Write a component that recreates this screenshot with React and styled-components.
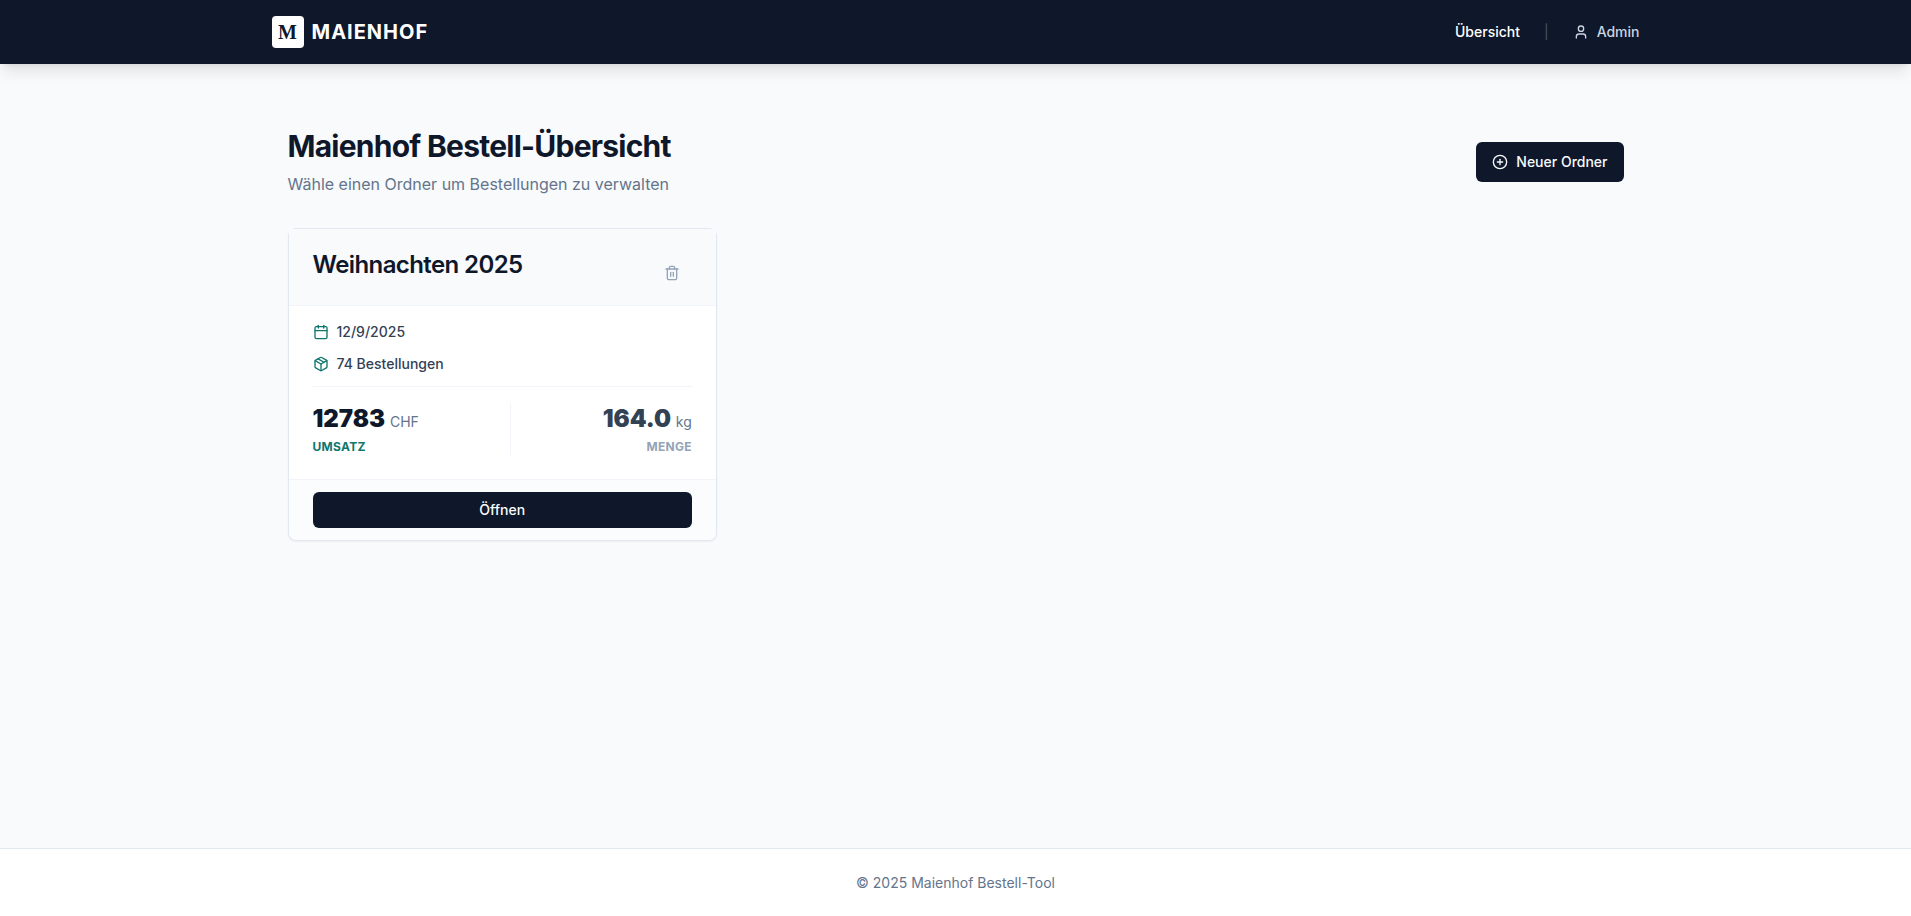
import React, { useState } from "react";
import styled, { createGlobalStyle, css } from "styled-components";
import { Calendar, CirclePlus, Package, Trash2, User } from "lucide-react";

const initialFolders = [
  {
    id: 1,
    name: "Weihnachten 2025",
    date: "12/9/2025",
    orders: 74,
    revenue: 12783,
    weight: 164,
  },
];

const FolderCard = ({ folder, onDelete }) => {
  return (
    <Card>
      <CardHeader>
        <CardTitle>{folder.name}</CardTitle>
        <IconButton
          type="button"
          aria-label="Ordner löschen"
          onClick={() => onDelete(folder.id)}
        >
          <Trash2 size={16} />
        </IconButton>
      </CardHeader>
      <CardContent>
        <InfoRow>
          <Calendar size={16} />
          <span>{folder.date}</span>
        </InfoRow>
        <InfoRow>
          <Package size={16} />
          <span>{folder.orders} Bestellungen</span>
        </InfoRow>
        <Stats>
          <Stat>
            <StatValue>
              {folder.revenue} <Unit>CHF</Unit>
            </StatValue>
            <StatLabel>UMSATZ</StatLabel>
          </Stat>
          <Stat $muted>
            <StatValue $muted>
              {folder.weight.toFixed(1)} <Unit>kg</Unit>
            </StatValue>
            <StatLabel $muted>MENGE</StatLabel>
          </Stat>
        </Stats>
      </CardContent>
      <CardFooter>
        <Button type="button" $full>
          Öffnen
        </Button>
      </CardFooter>
    </Card>
  );
};

const App = () => {
  const [folders, setFolders] = useState(initialFolders);

  const handleDelete = (id) => {
    setFolders(folders.filter((folder) => folder.id !== id));
  };

  return (
    <Page>
      <GlobalStyle />
      <Header>
        <HeaderInner>
          <Brand href="#">
            <Logo>M</Logo>
            <span>MAIENHOF</span>
          </Brand>
          <Nav>
            <NavLink href="#" $active>
              Übersicht
            </NavLink>
            <Divider>|</Divider>
            <NavLink href="#admin">
              <User size={16} />
              Admin
            </NavLink>
          </Nav>
        </HeaderInner>
      </Header>
      <Main>
        <TitleRow>
          <div>
            <h1>Maienhof Bestell-Übersicht</h1>
            <p>Wähle einen Ordner um Bestellungen zu verwalten</p>
          </div>
          <Button type="button">
            <CirclePlus size={16} />
            Neuer Ordner
          </Button>
        </TitleRow>
        <Grid>
          {folders.map((folder) => (
            <FolderCard
              key={folder.id}
              folder={folder}
              onDelete={handleDelete}
            />
          ))}
        </Grid>
      </Main>
      <Footer>© 2025 Maienhof Bestell-Tool</Footer>
    </Page>
  );
};

export default App;

const GlobalStyle = createGlobalStyle`
  *, *::before, *::after {
    box-sizing: border-box;
  }

  body {
    margin: 0;
    font-family: Inter, "Liberation Sans", sans-serif;
    font-size: 16px;
    line-height: 24px;
    color: #0f172a;
    background-color: #f8fafc;
  }

  h1, h2, p {
    margin: 0;
  }

  a {
    text-decoration: none;
  }

  button {
    font-family: inherit;
    border: none;
    cursor: pointer;
  }
`;

const Page = styled.div`
  display: flex;
  flex-direction: column;
  min-height: 100vh;
`;

const Header = styled.header`
  background-color: #0f172a;
  box-shadow: 0 10px 15px -3px rgba(0, 0, 0, 0.1),
    0 4px 6px -4px rgba(0, 0, 0, 0.1);
`;

const HeaderInner = styled.div`
  display: flex;
  align-items: center;
  justify-content: space-between;
  max-width: 1400px;
  height: 64px;
  margin: 0 auto;
  padding: 0 16px;
`;

const Brand = styled.a`
  display: flex;
  align-items: center;
  gap: 8px;
  color: white;
  font-size: 20px;
  font-weight: 700;
  line-height: 28px;
  letter-spacing: 0.05em;
`;

const Logo = styled.span`
  display: flex;
  align-items: center;
  justify-content: center;
  width: 32px;
  height: 32px;
  border-radius: 4px;
  background-color: white;
  color: #0f172a;
  font-family: "Liberation Serif", serif;
  letter-spacing: normal;
`;

const Nav = styled.nav`
  display: flex;
  align-items: center;
  gap: 24px;
  font-size: 14px;
  line-height: 20px;
`;

const NavLink = styled.a`
  display: flex;
  align-items: center;
  gap: 8px;
  font-weight: 500;
  color: ${({ $active }) => ($active ? "white" : "#cbd5e1")};
`;

const Divider = styled.span`
  color: #475569;
`;

const Main = styled.main`
  flex: 1;
  width: 100%;
  max-width: 1400px;
  margin: 0 auto;
  padding: 64px 32px;
`;

const TitleRow = styled.div`
  display: flex;
  align-items: center;
  justify-content: space-between;
  margin-bottom: 32px;

  h1 {
    font-size: 30px;
    font-weight: 700;
    line-height: 36px;
    letter-spacing: -0.025em;
  }

  p {
    margin-top: 8px;
    color: #64748b;
  }
`;

const Button = styled.button`
  display: inline-flex;
  align-items: center;
  justify-content: center;
  gap: 8px;
  height: 40px;
  padding: 0 16px;
  border-radius: 6px;
  background-color: #0f172a;
  color: #f8fafc;
  font-size: 14px;
  font-weight: 500;
  line-height: 20px;

  ${({ $full }) =>
    $full &&
    css`
      display: flex;
      width: 100%;
      height: 36px;
    `}
`;

const IconButton = styled.button`
  display: flex;
  align-items: center;
  justify-content: center;
  width: 40px;
  height: 40px;
  padding: 0;
  border-radius: 6px;
  background: none;
  color: #94a3b8;
`;

const Grid = styled.div`
  display: grid;
  grid-template-columns: repeat(3, 1fr);
  gap: 24px;

  @media (max-width: 1024px) {
    grid-template-columns: 1fr;
  }
`;

const Card = styled.article`
  border: 1px solid #e2e8f0;
  border-radius: 8px;
  background-color: white;
  box-shadow: 0 1px 2px rgba(0, 0, 0, 0.05);
`;

const CardHeader = styled.div`
  display: flex;
  align-items: flex-start;
  justify-content: space-between;
  padding: 24px 24px 12px;
  border-bottom: 1px solid #f1f5f9;
  background-color: #f8fafc;
`;

const CardTitle = styled.h2`
  font-size: 24px;
  font-weight: 600;
  line-height: 24px;
  letter-spacing: -0.025em;
`;

const CardContent = styled.div`
  display: flex;
  flex-direction: column;
  gap: 12px;
  padding: 16px 24px 24px;
`;

const InfoRow = styled.div`
  display: flex;
  align-items: center;
  gap: 8px;
  color: #334155;
  font-size: 14px;
  font-weight: 500;
  line-height: 20px;

  svg {
    color: #0f766e;
  }
`;

const Stats = styled.div`
  display: grid;
  grid-template-columns: 1fr 1fr;
  gap: 16px;
  padding-top: 16px;
  border-top: 1px solid #f1f5f9;
`;

const Stat = styled.div`
  display: flex;
  flex-direction: column;
  gap: 4px;

  ${({ $muted }) =>
    $muted &&
    css`
      border-left: 1px solid #f1f5f9;
      text-align: right;
    `}
`;

const StatValue = styled.div`
  color: ${({ $muted }) => ($muted ? "#334155" : "#0f172a")};
  font-size: 24px;
  font-weight: 900;
  line-height: 32px;
`;

const Unit = styled.span`
  color: #64748b;
  font-size: 14px;
  font-weight: 400;
  line-height: 20px;
`;

const StatLabel = styled.div`
  color: ${({ $muted }) => ($muted ? "#94a3b8" : "#0f766e")};
  font-size: 12px;
  font-weight: 700;
  line-height: 16px;
  letter-spacing: 0.025em;
`;

const CardFooter = styled.div`
  padding: 12px 24px;
  border-top: 1px solid #f1f5f9;
  border-radius: 0 0 8px 8px;
  background-color: #fbfcfd;
`;

const Footer = styled.footer`
  padding: 24px 0 23px;
  border-top: 1px solid #e2e8f0;
  background-color: white;
  color: #64748b;
  font-size: 14px;
  line-height: 20px;
  text-align: center;
`;
